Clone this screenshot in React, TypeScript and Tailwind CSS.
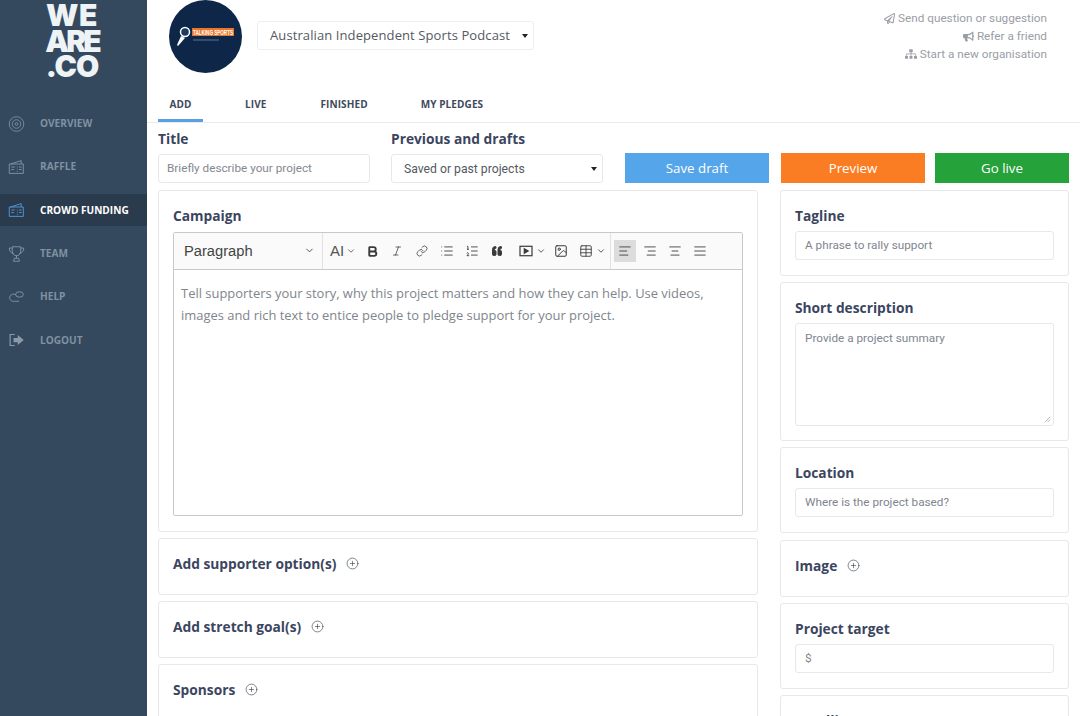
import { ChevronDown, Bold, Italic, Link, List, ListOrdered, Quote, AlignLeft, AlignRight, AlignCenter, AlignJustify, Table, Image, CirclePlus } from "lucide-react"
import { FaRegPaperPlane, FaBullhorn, FaSitemap } from "react-icons/fa"

const ink = "text-[#3b4560]"

function DiscIcon() {
  return (
    <svg viewBox="0 0 20 20" className="h-[18px] w-[18px]" fill="none" stroke="currentColor" strokeWidth="0.9">
      <circle cx="10" cy="10" r="8.6" />
      <circle cx="10" cy="10" r="5" />
      <circle cx="10" cy="10" r="1.6" />
    </svg>
  )
}

function TicketIcon() {
  return (
    <svg viewBox="0 0 20 20" className="h-[18px] w-[18px]" fill="none" stroke="currentColor" strokeWidth="1">
      <path d="M1.5 6.5h16.5v11H1.5zM3 6.5 15.5 2.5v4" />
      <path d="M4 10h4M4 13h3M11 9.5v1M11 12v1M11 14.5v1M13 10h3M13 13h3" />
    </svg>
  )
}

function TrophyIcon() {
  return (
    <svg viewBox="0 0 20 20" className="h-[20px] w-[20px]" fill="none" stroke="currentColor" strokeWidth="1">
      <path d="M5 1.5h10v5c0 3.2-2 5.5-5 5.5s-5-2.3-5-5.500zM5 3H1.500c0 3.500 1.500 5.500 5 6.500M15 3h3.500c0 3.500-1.500 5.500-5 6.500" />
      <path d="M10 12v3M6.500 18.500l1-3.500h5l1 3.500z" />
    </svg>
  )
}

function ChatIcon() {
  return (
    <svg viewBox="0 0 20 20" className="h-[18px] w-[18px]" fill="none" stroke="currentColor" strokeWidth="1">
      <path d="M9.500 7.500a4.700 4.300 0 1 0-1.500 7.500h5" />
      <ellipse cx="13.500" cy="7" rx="4.500" ry="3.200" />
    </svg>
  )
}

function LogoutIcon() {
  return (
    <svg viewBox="0 0 20 20" className="h-[18px] w-[18px]">
      <path d="M8 3.500H2.500v13H8" fill="none" stroke="currentColor" strokeWidth="1.400" />
      <path d="M6.500 7.500h5V4l7 6-7 6v-3.500h-5z" fill="currentColor" />
    </svg>
  )
}

function VideoIcon() {
  return (
    <svg viewBox="0 0 16 14" className="h-[12px] w-[14px]" fill="none" stroke="currentColor" strokeWidth="1.400">
      <rect x="1" y="1.500" width="14" height="11" />
      <path d="M6 4.500 10.500 7 6 9.500z" fill="currentColor" />
    </svg>
  )
}

function NavItem({ icon, label, active }: { icon: React.ReactNode; label: string; active?: boolean }) {
  return (
    <div className={`flex h-[32px] items-center gap-[15px] pl-[8px] ${active ? "bg-[#2b3b4e] text-white" : "text-[#7f91a2]"}`}>
      <span className={`flex w-[17px] justify-center ${active ? "text-[#5aa0e0]" : "text-[#8a9aaa]"}`}>{icon}</span>
      <span className="text-[10.100px] font-bold">{label}</span>
    </div>
  )
}

function Card({ className, children }: { className: string; children?: React.ReactNode }) {
  return <section className={`rounded-[3px] border border-[#e6e8ec] bg-white ${className}`}>{children}</section>
}

function Heading({ children }: { children: React.ReactNode }) {
  return <h3 className={`text-[13.750px] leading-[20px] font-bold ${ink}`}>{children}</h3>
}

function AddRow({ label, className }: { label: string; className: string }) {
  return (
    <Card className={`flex shrink-0 items-center gap-[10px] px-[14px] pb-[6px] ${className}`}>
      <Heading>{label}</Heading>
      <CirclePlus size={13} strokeWidth={1.200} className="text-[#3f4650]" />
    </Card>
  )
}

function FieldBox({ children }: { children: React.ReactNode }) {
  return <div className="mt-[5px] flex h-[29px] items-center rounded-[3px] border border-[#e6e8ec] px-[9px] pt-px font-['Roboto',sans-serif] text-[11.750px] text-[#808590]">{children}</div>
}

function ToolButton({ children, active }: { children: React.ReactNode; active?: boolean }) {
  return <span className={`flex h-[22px] w-[22px] items-center justify-center ${active ? "bg-[#dcdcdc]" : ""}`}>{children}</span>
}

function Divider() {
  return <span className="mx-[1px] h-[36px] w-px bg-[#e2e2e2]" />
}

export default function App() {
  return (
    <div className="flex h-[716px] w-[1080px] overflow-hidden bg-white font-['Open_Sans',sans-serif]">
      <aside className="flex w-[147px] shrink-0 flex-col bg-[#34495e]">
        <div className="flex h-[107.700px] flex-col items-center pt-[3px] pr-[3px] font-['Inter',sans-serif] text-[30px] leading-[25.500px] font-black text-[#eef3f6]">
          <span className="tracking-[0.500px]">WE</span>
          <span className="tracking-[-3px]">ARE</span>
          <span className="tracking-[-1px]">.CO</span>
        </div>
        <div className="flex flex-col gap-[11.300px]">
          <NavItem icon={<DiscIcon />} label="OVERVIEW" />
          <NavItem icon={<TicketIcon />} label="RAFFLE" />
          <NavItem icon={<TicketIcon />} label="CROWD FUNDING" active />
          <NavItem icon={<TrophyIcon />} label="TEAM" />
          <NavItem icon={<ChatIcon />} label="HELP" />
          <NavItem icon={<LogoutIcon />} label="LOGOUT" />
        </div>
      </aside>

      <main className="min-w-0 flex-1">
        <header className="flex h-[92px] items-start pr-[33px] pl-[22px]">
          <div className="flex h-[73px] w-[73px] shrink-0 items-center justify-center rounded-full bg-[#0e2749]">
            <svg viewBox="0 0 73 73" className="h-[73px] w-[73px]">
              <path d="M8 45 12 36l4 2-7 8z" fill="#ffffff" />
              <circle cx="16" cy="32" r="4.500" fill="#1d3a5f" stroke="#ffffff" strokeWidth="1.500" />
              <rect x="23" y="28" width="42" height="8" fill="#e8762c" />
              <rect x="24" y="39.500" width="26" height="1" fill="#5c7391" />
              <text x="24" y="34.500" fontSize="6.500" fontWeight="700" fill="#ffffff" fontFamily="Liberation Sans" textLength="40" lengthAdjust="spacingAndGlyphs">TALKING SPORTS</text>
            </svg>
          </div>
          <div className="mt-[21px] ml-[15px] flex h-[29px] w-[277px] items-center justify-between rounded-[3px] border border-[#eceef0] pr-[5px] pl-[12px] text-[13px] tracking-[0.100px] whitespace-nowrap text-[#55595f]">
            <span>Australian Independent Sports Podcast</span>
            <span className="h-0 w-0 border-x-[3.500px] border-t-[4px] border-x-transparent border-t-[#222222]" />
          </div>
          <div className="ml-auto flex flex-col items-end pt-[9px] font-['Roboto',sans-serif] text-[11.750px] leading-[18px] text-[#9a9ea6]">
            <span className="flex items-center gap-[3px]"><FaRegPaperPlane size={11} />Send question or suggestion</span>
            <span className="flex items-center gap-[3px]"><FaBullhorn size={11} />Refer a friend</span>
            <span className="flex items-center gap-[3px]"><FaSitemap size={12} />Start a new organisation</span>
          </div>
        </header>

        <nav className="flex h-[31px] border-b border-[#e8eaed] pl-[11px] text-[10px] font-bold tracking-[0.100px] text-[#3f4a5c]">
          <span className="flex w-[45px] justify-center border-b-[3px] border-[#5b9fe0] pt-[5px]">ADD</span>
          <span className="ml-[42px] pt-[5px]">LIVE</span>
          <span className="ml-[54px] pt-[5px]">FINISHED</span>
          <span className="ml-[53px] pt-[5px]">MY PLEDGES</span>
        </nav>

        <div className="flex h-[67px] items-end px-[11px] pb-[7px]">
          <div className="w-[212px]">
            <Heading>Title</Heading>
            <div className="mt-[5px] flex h-[29px] items-center rounded-[3px] border border-[#e6e8ec] px-[8px] pt-px font-['Roboto',sans-serif] text-[11.750px] text-[#84888f]">Briefly describe your project</div>
          </div>
          <div className="ml-[21px] w-[212px]">
            <Heading>Previous and drafts</Heading>
            <div className="mt-[5px] flex h-[29px] items-center justify-between rounded-[3px] border border-[#e6e8ec] pt-px pr-[5px] pl-[12px] font-['Roboto',sans-serif] text-[12.200px] text-[#55595f]">
              Saved or past projects
              <span className="h-0 w-0 border-x-[3.500px] border-t-[4px] border-x-transparent border-t-[#222222]" />
            </div>
          </div>
          <button className="ml-[22px] h-[30px] w-[144px] bg-[#55a5ea] pt-[2px] text-[13.300px] text-white">Save draft</button>
          <button className="ml-[12px] h-[30px] w-[144px] bg-[#fb7d23] pt-[2px] text-[13.300px] text-white">Preview</button>
          <button className="ml-[10px] h-[30px] w-[134px] bg-[#25a23a] pt-[2px] text-[13.300px] text-white">Go live</button>
        </div>

        <div className="flex items-start pl-[11px]">
          <div className="flex w-[600px] shrink-0 flex-col gap-[6px]">
            <Card className="h-[342px] px-[14px] pt-[15px]">
              <Heading>Campaign</Heading>
              <div className="mt-[6px] h-[284px] rounded-[2px] border border-[#c9c9c9] font-['Liberation_Sans',sans-serif]">
                <div className="flex h-[37px] items-center border-b border-[#c9c9c9] bg-[#fafafa] pl-[1px] text-[#3a3a3a]">
                  <span className="flex w-[146px] items-center justify-between pr-[6px] pl-[9px] text-[14.700px] text-[#444444]">
                    Paragraph
                    <ChevronDown size={11} />
                  </span>
                  <Divider />
                  <span className="ml-[6px] flex w-[31px] items-center gap-[2px] text-[15px] text-[#555555]">AI<ChevronDown size={10} /></span>
                  <ToolButton><Bold size={13} strokeWidth={3.500} /></ToolButton>
                  <span className="ml-[3px]"><ToolButton><Italic size={12} strokeWidth={1.500} /></ToolButton></span>
                  <span className="ml-[3px]"><ToolButton><Link size={12} strokeWidth={1.500} /></ToolButton></span>
                  <span className="ml-[3px]"><ToolButton><List size={14} strokeWidth={1.500} /></ToolButton></span>
                  <span className="ml-[3px]"><ToolButton><ListOrdered size={14} strokeWidth={1.500} /></ToolButton></span>
                  <span className="ml-[3px]"><ToolButton><Quote size={12} fill="currentColor" className="rotate-180" /></ToolButton></span>
                  <span className="ml-[4px]"><Divider /></span>
                  <span className="ml-[5px] flex w-[31px] items-center gap-[3px]"><VideoIcon /><ChevronDown size={10} /></span>
                  <ToolButton><Image size={14} strokeWidth={1.700} /></ToolButton>
                  <span className="ml-[3px] flex w-[34px] items-center justify-center gap-[3px]"><Table size={14} strokeWidth={1.500} /><ChevronDown size={10} /></span>
                  <Divider />
                  <span className="ml-[2px]"><ToolButton active><AlignLeft size={14} strokeWidth={1.500} /></ToolButton></span>
                  <span className="ml-[3px]"><ToolButton><AlignRight size={14} strokeWidth={1.500} /></ToolButton></span>
                  <span className="ml-[3px]"><ToolButton><AlignCenter size={14} strokeWidth={1.500} /></ToolButton></span>
                  <span className="ml-[3px]"><ToolButton><AlignJustify size={14} strokeWidth={1.500} /></ToolButton></span>
                </div>
                <p className="px-[7px] pt-[12px] font-['Open_Sans',sans-serif] text-[12.950px] leading-[22px] text-[#80858d]">
                  Tell supporters your story, why this project matters and how they can help. Use videos, images and rich text to entice people to pledge support for your project.
                </p>
              </div>
            </Card>
            <AddRow label="Add supporter option(s)" className="h-[57px]" />
            <AddRow label="Add stretch goal(s)" className="h-[57px]" />
            <AddRow label="Sponsors" className="h-[57px]" />
          </div>

          <div className="ml-[22px] flex w-[289px] shrink-0 flex-col gap-[6px]">
            <Card className="h-[86px] px-[14px] pt-[15px]">
              <Heading>Tagline</Heading>
              <FieldBox>A phrase to rally support</FieldBox>
            </Card>
            <Card className="h-[159px] px-[14px] pt-[15px]">
              <Heading>Short description</Heading>
              <div className="relative mt-[5px] h-[103px] rounded-[3px] border border-[#e6e8ec] px-[9px] py-[6px] font-['Roboto',sans-serif] text-[11.750px] text-[#808590]">
                Provide a project summary
                <svg viewBox="0 0 8 8" className="absolute right-[2px] bottom-[2px] h-[7px] w-[7px]" stroke="#9a9a9a" strokeWidth="0.800"><path d="M7 1 1 7M7 4 4 7" /></svg>
              </div>
            </Card>
            <Card className="h-[86px] px-[14px] pt-[15px]">
              <Heading>Location</Heading>
              <FieldBox>Where is the project based?</FieldBox>
            </Card>
            <AddRow label="Image" className="mt-px h-[57px]" />
            <Card className="h-[86px] px-[14px] pt-[15px]">
              <Heading>Project target</Heading>
              <FieldBox>$</FieldBox>
            </Card>
            <Card className="h-[57px] shrink-0 px-[14px] pt-[15px]">
              <Heading>Deadline</Heading>
            </Card>
          </div>
        </div>
      </main>
    </div>
  )
}
